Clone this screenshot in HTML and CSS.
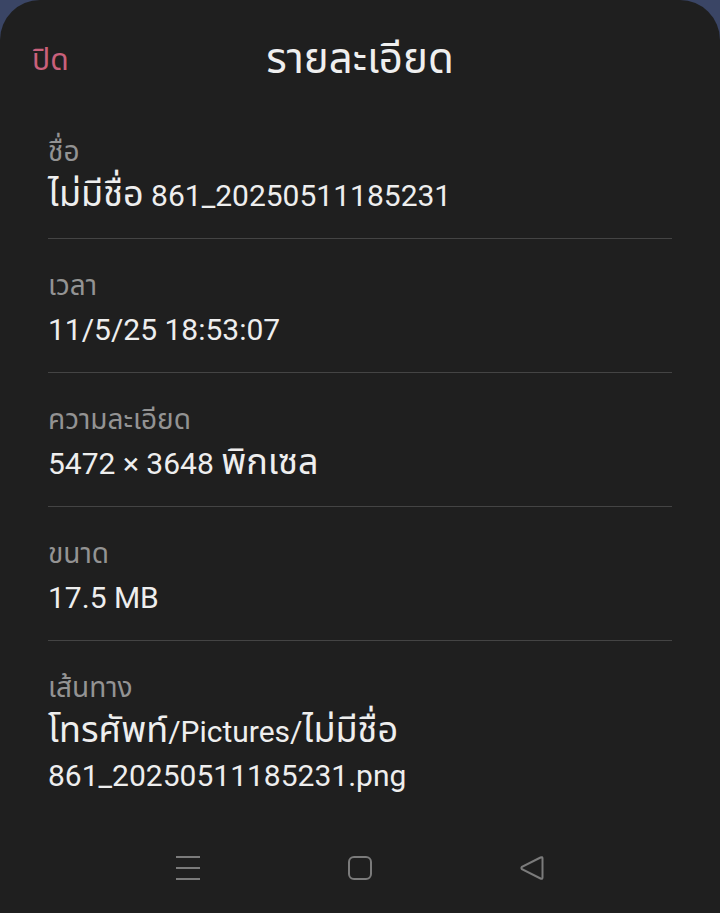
FILE: index.html
```html
<!DOCTYPE html>
<html lang="th">

<head>
    <meta charset="UTF-8">
    <meta name="viewport" content="width=device-width, initial-scale=1.0">
    <title>รายละเอียด</title>
    <link rel="stylesheet" href="styles.css">
</head>

<body>
    <div class="sheet">
        <div class="header">
            <span class="close">ปิด</span>
            <h1 class="title">รายละเอียด</h1>
        </div>

        <div class="list">
            <div class="item">
                <div class="label">ชื่อ</div>
                <div class="value"><span class="th">ไม่มีชื่อ</span> 861_20250511185231</div>
            </div>
            <div class="item">
                <div class="label">เวลา</div>
                <div class="value">11/5/25 18:53:07</div>
            </div>
            <div class="item">
                <div class="label">ความละเอียด</div>
                <div class="value">5472 × 3648 <span class="th">พิกเซล</span></div>
            </div>
            <div class="item">
                <div class="label">ขนาด</div>
                <div class="value">17.5 MB</div>
            </div>
            <div class="item last">
                <div class="label">เส้นทาง</div>
                <div class="value"><span class="th">โทรศัพท์</span>/Pictures/<span class="th">ไม่มีชื่อ</span><br>861_20250511185231.png</div>
            </div>
        </div>

        <div class="navbar">
            <svg class="nav-icon" viewBox="0 0 24 24" width="24" height="24">
                <path d="M0 1h24M0 12h24M0 23h24" />
            </svg>
            <svg class="nav-icon" viewBox="0 0 24 24" width="24" height="24">
                <rect x="1" y="1" width="22" height="22" rx="5" />
            </svg>
            <svg class="nav-icon" viewBox="0 0 24 24" width="24" height="24">
                <path d="M22.5 2.5 L22.5 21.5 Q22.5 23.5 20.5 22.5 L2 13.2 Q0.8 12 2 10.8 L20.5 1.5 Q22.5 0.5 22.5 2.5 Z" />
            </svg>
        </div>
    </div>
</body>

</html>
```

FILE: styles.css
```css
html, body {
    margin: 0;
    padding: 0;
    height: 100%;
}

body {
    background-color: #3a4565;
    font-family: Roboto, "Noto Sans Thai", "Noto Sans", sans-serif;
}

.sheet {
    background-color: #1f1f1f;
    border-radius: 40px 40px 0 0;
    height: 100%;
    display: flex;
    flex-direction: column;
}

.header {
    height: 105px;
    position: relative;
    display: flex;
    justify-content: center;
}

.close {
    position: absolute;
    left: 32px;
    top: 40px;
    font-size: 30px;
    line-height: 40px;
    color: #c9607b;
}

.title {
    margin: 0;
    margin-top: 37px;
    font-size: 42px;
    line-height: 44px;
    font-weight: normal;
    color: #efefef;
}

.list {
    padding: 0 48px;
}

.item {
    padding: 30px 0 20px;
    border-bottom: 1px solid #444444;
}

.item.last {
    border-bottom: none;
}

.label {
    font-size: 28px;
    line-height: 34px;
    color: #939393;
}

.value {
    margin-top: 5px;
    font-size: 30px;
    line-height: 44px;
    color: #eeeeee;
}

.th {
    font-size: 1.2em;
    line-height: 1;
}

.navbar {
    margin-top: auto;
    height: 90px;
    display: flex;
    justify-content: center;
    align-items: center;
    gap: 148px;
}

.nav-icon {
    fill: none;
    stroke: #7b7b7b;
    stroke-width: 2;
}
```
